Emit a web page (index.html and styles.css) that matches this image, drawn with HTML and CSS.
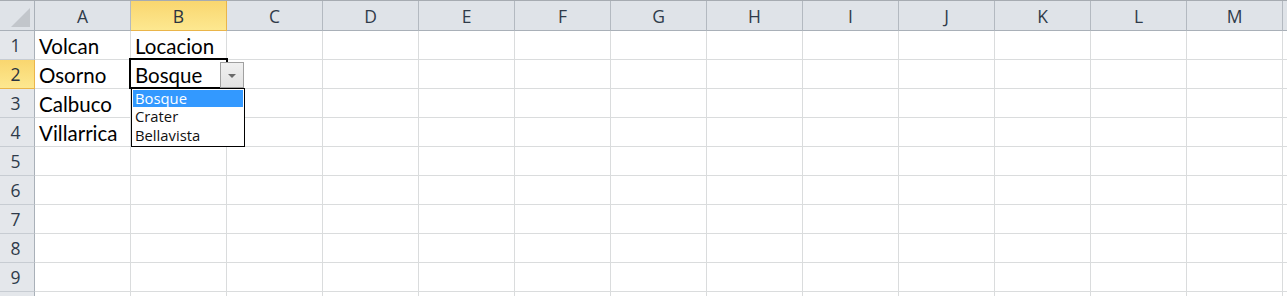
FILE: index.html
```html
<!doctype html>
<html lang="es">
  <head>
    <meta charset="UTF-8" />
    <title>Hoja de cálculo</title>
    <link rel="stylesheet" href="styles.css">
  </head>
  <body>
    <div class="sheet">
      <div class="corner"><span class="tri"></span></div>
      <div class="col-head">A</div>
      <div class="col-head active">B</div>
      <div class="col-head">C</div>
      <div class="col-head">D</div>
      <div class="col-head">E</div>
      <div class="col-head">F</div>
      <div class="col-head">G</div>
      <div class="col-head">H</div>
      <div class="col-head">I</div>
      <div class="col-head">J</div>
      <div class="col-head">K</div>
      <div class="col-head">L</div>
      <div class="col-head">M</div>
      <div class="col-head"></div>
    </div>
    <script>
      const sheet = document.querySelector(".sheet");
      const data = [
        ["Volcan", "Locacion"],
        ["Osorno", "Bosque"],
        ["Calbuco", ""],
        ["Villarrica", ""]
      ];

      // row 10 only peeks in at the bottom, so it gets no label
      for (let r = 1; r <= 10; r++) {
        const head = document.createElement("div");
        head.className = r === 2 ? "row-head active" : "row-head";
        head.textContent = r < 10 ? r : "";
        sheet.appendChild(head);
        for (let c = 0; c < 14; c++) {
          const cell = document.createElement("div");
          cell.className = "cell";
          const row = data[r - 1];
          if (row && row[c]) cell.textContent = row[c];
          if (r === 2 && c === 1) {
            cell.classList.add("selected");
            cell.innerHTML = `Bosque
              <div class="sel-box"></div>
              <div class="drop-btn"><span class="arrow"></span></div>
              <ul class="drop-list">
                <li class="hl">Bosque</li>
                <li>Crater</li>
                <li>Bellavista</li>
              </ul>`;
          }
          sheet.appendChild(cell);
        }
      }
    </script>
  </body>
</html>
```
FILE: styles.css
```css
/* Sheet */
body {
  margin: 0;
  background-color: #ffffff;
  overflow: hidden;
}

.sheet {
  display: grid;
  grid-template-columns: 35px repeat(13, 96px) 1fr;
  grid-template-rows: 30px;
  grid-auto-rows: 29px;
  border-top: 1px solid #a6abb1;
  font-family: Lato, "Liberation Sans", sans-serif;
}

.corner {
  position: relative;
  background-color: #dfe3e8;
  border-right: 1px solid #a9b0b8;
  border-bottom: 1px solid #a9b0b8;
}

.corner .tri {
  position: absolute;
  right: 4px;
  bottom: 3px;
  width: 0;
  height: 0;
  border-left: 19px solid transparent;
  border-bottom: 19px solid #c2c6cb;
}

.col-head,
.row-head {
  background-color: #dfe3e8;
  color: #2f3b4a;
  font-family: "Open Sans", "Noto Sans", sans-serif;
  font-size: 17.5px;
  display: flex;
  justify-content: center;
  align-items: center;
}

.col-head {
  border-right: 1px solid #b3b9c0;
  border-bottom: 1px solid #a9b0b8;
  padding-top: 1px;
}

.row-head {
  background-color: #e4e7eb;
  border-right: 1px solid #a9b0b8;
  border-bottom: 1px solid #c7ccd2;
  padding-right: 3px;
}

.col-head.active,
.row-head.active {
  background: linear-gradient(#f9d66f, #fde890);
  border-color: #eab54a;
  color: #2a3340;
}

.cell {
  position: relative;
  border-right: 1px solid #dadcdd;
  border-bottom: 1px solid #dadcdd;
  font-size: 20.5px;
  line-height: 24px;
  color: #000000;
  padding: 3px 0 0 4px;
  white-space: nowrap;
}

/* Validation dropdown */
.sel-box {
  position: absolute;
  left: -2px;
  top: -2px;
  width: 95px;
  height: 27px;
  border: 2px solid #000000;
}

.drop-btn {
  position: absolute;
  left: 89px;
  top: 2px;
  width: 22px;
  height: 24px;
  background: linear-gradient(#f0f0f0, #e2e2e2);
  border: 1px solid #a0a0a0;
  display: flex;
  justify-content: center;
  align-items: center;
  z-index: 2;
}

.arrow {
  width: 0;
  height: 0;
  border-left: 4px solid transparent;
  border-right: 4px solid transparent;
  border-top: 4px solid #6a6a6a;
  margin-top: 1px;
}

.drop-list {
  position: absolute;
  left: 0;
  top: 28px;
  width: 110px;
  margin: 0;
  padding: 1px;
  list-style: none;
  background-color: #ffffff;
  border: 1px solid #000000;
  font-family: "Open Sans", "Noto Sans", sans-serif;
  font-size: 14.8px;
  color: #111111;
  z-index: 3;
}

.drop-list li {
  padding-left: 2px;
  height: 19px;
  line-height: 19px;
}

.drop-list li.hl {
  background-color: #3399ff;
  color: #ffffff;
  height: 17px;
  line-height: 17px;
}
```
